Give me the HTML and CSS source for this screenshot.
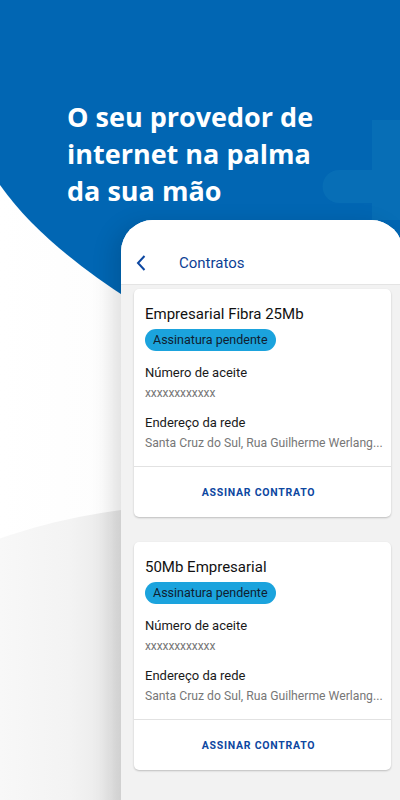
FILE: index.html
```html
<!DOCTYPE html>
<html lang="pt-BR">
<head>
<meta charset="utf-8">
<link rel="stylesheet" href="styles.css">
</head>
<body>
<div class="screen">
  <svg class="bg-blue" width="400" height="300" viewBox="0 0 400 300" aria-hidden="true">
    <path d="M0 0 H400 V300 H130 C80 268 30 228 0 185 Z" fill="#0166b3"/>
    <path d="M372 120 H400 V220 H372 Z" fill="#076eb6"/>
    <path d="M339 170 H400 V203 H339 A16.5 16.5 0 0 1 339 170 Z" fill="#076eb6"/>
  </svg>
  <div class="bg-gray" aria-hidden="true"></div>

  <h1 class="headline">O seu provedor de internet na palma da sua mão</h1>

  <div class="phone">
    <div class="appbar">
      <svg class="back" width="12" height="18" viewBox="0 0 12 18"><path d="M9.5 2 L3 9 L9.5 16" fill="none" stroke="#0d47a1" stroke-width="2"/></svg>
      <span class="appbar-title">Contratos</span>
    </div>
    <div class="content">
      <div class="card">
        <div class="card-body">
          <div class="card-title">Empresarial Fibra 25Mb</div>
          <span class="badge">Assinatura pendente</span>
          <div class="label">Número de aceite</div>
          <div class="value small">xxxxxxxxxxxx</div>
          <div class="label">Endereço da rede</div>
          <div class="value">Santa Cruz do Sul, Rua Guilherme Werlang...</div>
        </div>
        <div class="card-action">ASSINAR CONTRATO</div>
      </div>
      <div class="card">
        <div class="card-body">
          <div class="card-title">50Mb Empresarial</div>
          <span class="badge">Assinatura pendente</span>
          <div class="label">Número de aceite</div>
          <div class="value small">xxxxxxxxxxxx</div>
          <div class="label">Endereço da rede</div>
          <div class="value">Santa Cruz do Sul, Rua Guilherme Werlang...</div>
        </div>
        <div class="card-action">ASSINAR CONTRATO</div>
      </div>
    </div>
  </div>
</div>
</body>
</html>
```

FILE: styles.css
```css
* { box-sizing: border-box; }
html, body { margin: 0; padding: 0; }
body { background: #ffffff; font-family: Roboto, "Liberation Sans", sans-serif; }

.screen {
  position: relative;
  width: 400px;
  height: 800px;
  overflow: hidden;
  background: linear-gradient(90deg, #ffffff 0%, #fbfbfb 60%, #f0f0f0 100%);
}

.bg-blue {
  position: absolute;
  left: 0;
  top: 0;
  display: block;
}

.bg-gray {
  position: absolute;
  left: -300px;
  top: 505px;
  width: 1000px;
  height: 800px;
  border-radius: 50%;
  background: linear-gradient(90deg, #f8f8f8 30%, #f3f3f3 37%, #e7e7e7 42%);
}

.headline {
  position: relative;
  margin: 0;
  padding: 98px 60px 0 67px;
  height: 220px;
  font-family: "Open Sans", sans-serif;
  font-weight: 700;
  font-size: 27px;
  line-height: 37px;
  color: #ffffff;
}

.phone {
  position: relative;
  margin-left: 121px;
  width: 282px;
  height: 600px;
  background: #f2f2f2;
  border-radius: 32px 32px 0 0;
  box-shadow: -8px 4px 22px rgba(0, 0, 0, 0.13);
  overflow: hidden;
}

.appbar {
  height: 65px;
  background: #ffffff;
  border-bottom: 1px solid #e4e4e4;
  display: flex;
  align-items: center;
  padding: 21px 0 0 14px;
}

.back { display: block; }

.appbar-title {
  margin-left: 32px;
  font-size: 15px;
  color: #0d3f95;
}

.content {
  padding: 4px 12px 0 13px;
  display: flex;
  flex-direction: column;
  gap: 25px;
}

.card {
  background: #ffffff;
  border-radius: 5px;
  box-shadow: 0 1px 2px rgba(0, 0, 0, 0.22);
  height: 228px;
  display: flex;
  flex-direction: column;
}

.card-body {
  padding: 15px 11px 0 11px;
  height: 178px;
  border-bottom: 1px solid #e2e2e2;
}

.card-title {
  font-size: 15px;
  color: #111111;
  line-height: 20px;
}

.badge {
  display: inline-block;
  margin-top: 5px;
  background: #1ba3dd;
  color: #102030;
  font-size: 12.5px;
  line-height: 22px;
  padding: 0 8px;
  border-radius: 11px;
}

.label {
  margin-top: 14px;
  font-size: 13px;
  line-height: 16px;
  color: #1a1a1a;
}

.value {
  margin-top: 4px;
  font-size: 12.2px;
  line-height: 16px;
  color: #777777;
  white-space: nowrap;
}

.value.small { font-size: 12px; letter-spacing: -0.1px; }

.value.small + .label { margin-top: 14px; }

.card-action {
  flex: 1;
  display: flex;
  align-items: center;
  justify-content: center;
  padding-right: 8px;
  font-size: 10.5px;
  font-weight: 700;
  letter-spacing: 0.75px;
  color: #0d47a1;
}
```
